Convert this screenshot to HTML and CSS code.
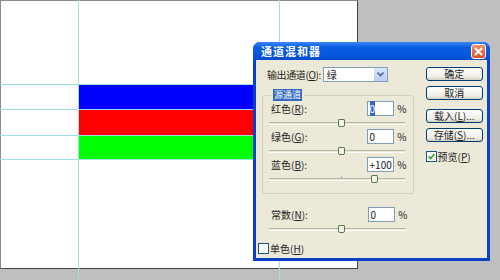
FILE: index.html
```html
<!DOCTYPE html>
<html>

<head>
  <meta charset="UTF-8">
  <title>通道混和器</title>
  <link rel="stylesheet" href="styles.css">
</head>

<body>
  <div class="workspace">
    <div class="canvas">
      <div class="bar bar-blue"></div>
      <div class="bar bar-red"></div>
      <div class="bar bar-green"></div>
    </div>

    <!-- guides -->
    <div class="guide guide-v" style="left:78px"></div>
    <div class="guide guide-v" style="left:279px"></div>
    <div class="guide guide-h" style="top:84px"></div>
    <div class="guide guide-h" style="top:109px"></div>
    <div class="guide guide-h" style="top:135px"></div>
    <div class="guide guide-h" style="top:159px"></div>

    <div class="dialog">
      <div class="titlebar">
        <span class="title">通道混和器</span>
        <span class="close">
          <svg width="13" height="13" viewBox="0 0 13 13">
            <path d="M3.5 3.5 L9.5 9.5 M9.5 3.5 L3.5 9.5" stroke="#fff" stroke-width="2" stroke-linecap="round" />
          </svg>
        </span>
      </div>

      <div class="dlg-body">
        <div class="left">
          <div class="out-row">
            <span class="lbl">输出通道(<u>O</u>):</span>
            <div class="select">
              <span>绿</span>
              <span class="select-btn">
                <svg width="9" height="7" viewBox="0 0 9 7">
                  <path d="M1.5 1.5 L4.5 4.5 L7.5 1.5" stroke="#4d6185" stroke-width="1.6" fill="none" />
                </svg>
              </span>
            </div>
          </div>

          <fieldset class="group">
            <legend><span class="sel legend-sel">源通道</span></legend>

            <div class="row">
              <span class="lbl">红色(<u>R</u>):</span>
              <span class="num"><span class="sel">0</span></span>
              <span class="pct">%</span>
            </div>
            <div class="slider"><span class="thumb" style="left:69px"></span></div>

            <div class="row">
              <span class="lbl">绿色(<u>G</u>):</span>
              <span class="num">0</span>
              <span class="pct">%</span>
            </div>
            <div class="slider"><span class="thumb" style="left:69px"></span></div>

            <div class="row">
              <span class="lbl">蓝色(<u>B</u>):</span>
              <span class="num">+100</span>
              <span class="pct">%</span>
            </div>
            <div class="slider tick"><span class="thumb" style="left:102px"></span></div>
          </fieldset>

          <div class="const">
            <div class="row">
              <span class="lbl">常数(<u>N</u>):</span>
              <span class="num">0</span>
              <span class="pct">%</span>
            </div>
            <div class="slider"><span class="thumb" style="left:69px"></span></div>
          </div>

          <label class="check mono"><span class="box"></span>单色(<u>H</u>)</label>
        </div>

        <div class="right">
          <button class="btn">确定</button>
          <button class="btn">取消</button>
          <button class="btn gap">载入(<u>L</u>)...</button>
          <button class="btn">存储(<u>S</u>)...</button>
          <label class="check">
            <span class="box checked">
              <svg width="9" height="9" viewBox="0 0 9 9">
                <path d="M1.5 4.5 L3.5 6.5 L7.5 2" stroke="#21a121" stroke-width="1.6" fill="none" />
              </svg>
            </span>预览(<u>P</u>)
          </label>
        </div>
      </div>
    </div>
  </div>
</body>

</html>
```

FILE: styles.css
```css
body {
  margin: 0;
  background-color: #bfbfbf;
  font-family: "Noto Sans CJK SC", "DejaVu Sans", sans-serif;
  font-size: 10px;
  color: #222;
}

.workspace {
  position: relative;
  width: 500px;
  height: 280px;
  overflow: hidden;
}

.canvas {
  width: 358px;
  height: 269px;
  background-color: #fff;
  border: 1px solid #444;
  border-top-color: #888;
  border-left-color: #888;
  box-sizing: border-box;
  padding-top: 84px;
  padding-left: 77px;
}

.bar {
  width: 200px;
}

.bar-blue {
  height: 25px;
  background-color: #0000ff;
}

.bar-red {
  height: 26px;
  background-color: #ff0000;
}

.bar-green {
  height: 24px;
  background-color: #00ff00;
}

.guide {
  position: absolute;
  background-color: #9ee0e0;
}

.guide-v {
  top: 0;
  width: 1px;
  height: 280px;
}

.guide-h {
  left: 0;
  width: 357px;
  height: 1px;
}

/* dialog */
.dialog {
  position: absolute;
  left: 253px;
  top: 42px;
  width: 237px;
  height: 219px;
  box-sizing: border-box;
  padding: 0 3px 3px;
  background-color: #0a3fc8;
  border-radius: 7px 7px 0 0;
  display: flex;
  flex-direction: column;
}

.titlebar {
  height: 18px;
  margin: 0 -3px;
  padding: 0 4px 0 8px;
  border-radius: 7px 7px 0 0;
  background: linear-gradient(#3a86f2, #0a5ee6 30%, #0654da 80%, #0a48c8);
  display: flex;
  align-items: center;
  justify-content: space-between;
}

.title {
  color: #fff;
  font-weight: bold;
  font-size: 11px;
  letter-spacing: 1px;
}

.close {
  width: 13px;
  height: 13px;
  border: 1px solid #fff;
  border-radius: 3px;
  background: linear-gradient(#f0906a, #d8502a);
  display: flex;
}

.dlg-body {
  flex: 1;
  background-color: #ece9d8;
  display: flex;
  padding: 7px 4px 0 6px;
}

.left {
  width: 153px;
}

.right {
  margin-left: 12px;
  width: 58px;
  display: flex;
  flex-direction: column;
}

.out-row {
  display: flex;
  align-items: center;
  height: 15px;
  padding-left: 5px;
}

.out-row .lbl {
  white-space: nowrap;
  letter-spacing: -0.4px;
  margin-right: 2px;
}

.select {
  width: 65px;
  height: 15px;
  box-sizing: border-box;
  border: 1px solid #7f9db9;
  background-color: #fff;
  display: flex;
  align-items: center;
  justify-content: space-between;
  padding-left: 3px;
}

.select-btn {
  width: 13px;
  height: 13px;
  background: linear-gradient(#dbe6fb, #b8cdf6);
  display: flex;
  align-items: center;
  justify-content: center;
}

.group {
  margin: 7px 0 0;
  padding: 0 6px 0 6px;
  height: 105px;
  box-sizing: border-box;
  border: 1px solid #d0d0bf;
  border-radius: 3px;
}

.group legend {
  padding: 0 2px;
  margin-left: 2px;
  line-height: 12px;
  font-size: 9px;
}

.sel {
  background-color: #316ac5;
  color: #fff;
}

.legend-sel {
  display: inline-block;
  line-height: 12px;
  padding: 0 1px;
}

.row {
  display: flex;
  align-items: center;
  height: 15px;
  white-space: nowrap;
}

.row .lbl {
  flex: 1;
  padding-left: 2px;
}

.num {
  width: 27px;
  height: 15px;
  box-sizing: border-box;
  border: 1px solid #7f9db9;
  background-color: #fff;
  padding-left: 2px;
  line-height: 13px;
}

.pct {
  width: 13px;
  text-align: right;
}

.slider {
  position: relative;
  height: 1px;
  margin: 6px 2px 4px 0;
  border-top: 1px solid #b8b4a4;
  border-bottom: 1px solid #fff;
}

.slider.tick::after {
  content: '';
  position: absolute;
  left: 72px;
  top: -3px;
  width: 1px;
  height: 3px;
  background-color: #aaa;
}

.thumb {
  position: absolute;
  top: -4px;
  width: 5px;
  height: 6px;
  border: 1px solid #5a7a4a;
  border-radius: 1px 1px 2px 2px;
  background-color: #f4f4ee;
}

.const {
  margin-top: 13px;
  padding: 0 6px 0 7px;
}

.check {
  display: flex;
  align-items: center;
  height: 12px;
  white-space: nowrap;
}

.check.mono {
  margin-top: 11px;
  margin-left: -4px;
}

.box {
  width: 11px;
  height: 11px;
  box-sizing: border-box;
  border: 1px solid #1c5180;
  background-color: #fff;
  margin-right: 1px;
  display: flex;
  align-items: center;
  justify-content: center;
}

.btn {
  height: 14px;
  margin-bottom: 5px;
  padding: 0;
  border: 1px solid #003c74;
  border-radius: 3px;
  background: linear-gradient(#fff, #f0efe8 70%, #d6d0c5);
  font-family: inherit;
  font-size: 10px;
  line-height: 12px;
  color: #222;
  white-space: nowrap;
}

.btn.gap {
  margin-top: 4px;
}

.right .check {
  margin-top: 3px;
}
```
